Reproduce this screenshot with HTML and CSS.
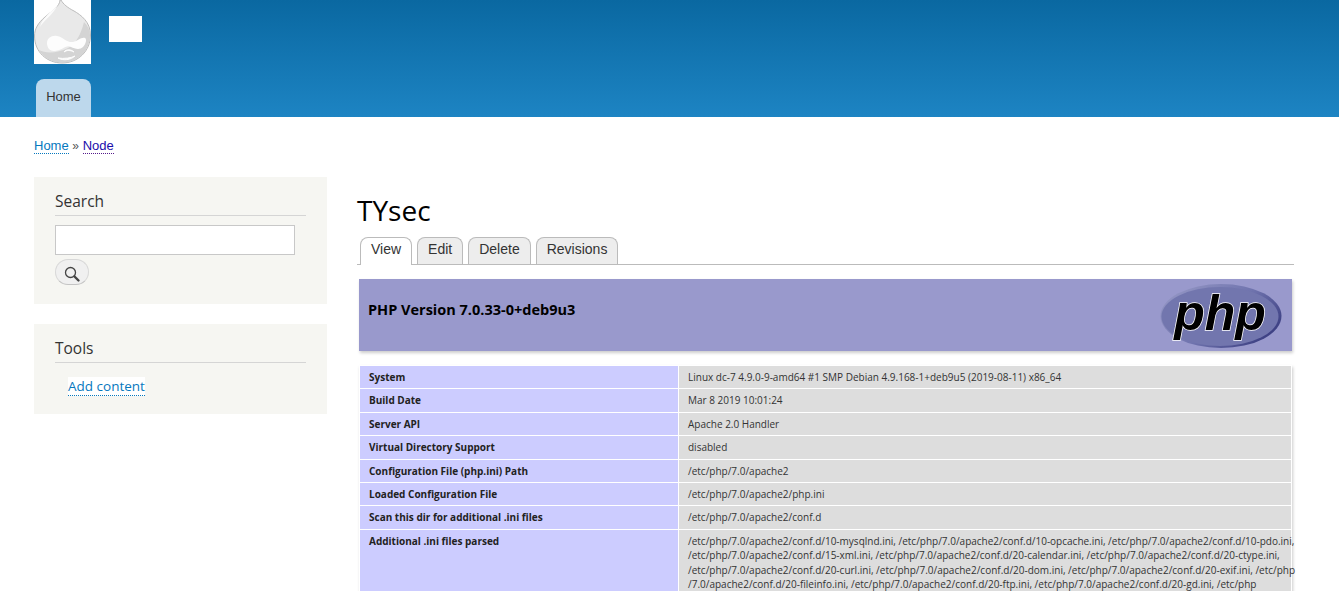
FILE: index.html
```html
<html>
<head>
    <title>TYsec | Drupal</title>
    <link rel="stylesheet" href="styles.css">
</head>
<body>
    <div class="header">
        <div class="branding">
            <a class="logo" href="#">
                <svg width="57" height="64" viewBox="0 0 57 64">
                    <rect width="57" height="64" fill="#fff"/>
                    <path d="M26 0 C26 6 18 11 11 17 C4 23 0.500 29 0.500 36 C0.500 52 13 63 28 63 C44 63 56.500 51 56.500 35 C56.500 22 47 15 40 11 C34 8 29 4 27 0 Z" fill="#e9e9e9" stroke="#bdbdbd"/>
                    <path d="M56 35 C56 51 44 62.500 28 62.500 C18 62.500 10 58 5 50 C12 54 24 53 34 48 C42 44 47 34 50 22 C54 26 56 30 56 35 Z" fill="#d4d4d4"/>
                    <path d="M13 43 C13 38 18 35 23 36 C29 37 33 43 39 42 C44 41 47 37 51 38 C53 39 52 44 49 47 C46 50 41 49 37 47 C32 44 28 51 20 51 C16 51 13 48 13 43 Z" fill="#fdfdfd"/>
                    <path d="M24 58 C29 61 37 60 41 56 C37 58 30 59 24 58 Z M30 52 C32 49 37 49 40 52 C36 50 33 50 30 52 Z" fill="#fdfdfd" stroke="#fdfdfd"/>
                    <path d="M24 5 C16 13 8 18 6 27 C10 20 18 16 24 5 Z" fill="#fbfbfb"/>
                </svg>
            </a>
            <div class="site-name"></div>
        </div>
        <ul class="main-menu">
            <li><a href="#">Home</a></li>
        </ul>
    </div>

    <div class="breadcrumb">
        <a href="#">Home</a> <span class="sep">»</span> <a class="visited" href="#">Node</a>
    </div>

    <div class="layout">
        <div class="sidebar">
            <div class="block block-search">
                <h2>Search</h2>
                <input class="search-input" type="text">
                <button class="search-button">
                    <svg width="18" height="18" viewBox="0 0 18 18">
                        <circle cx="7.500" cy="7.500" r="5" fill="none" stroke="#444" stroke-width="1.300"/>
                        <path d="M11.500 11.500 L15.500 15.500" stroke="#444" stroke-width="2.400" stroke-linecap="round"/>
                    </svg>
                </button>
            </div>
            <div class="block block-tools">
                <h2>Tools</h2>
                <a class="add-content" href="#">Add content</a>
            </div>
        </div>

        <div class="content">
            <h1>TYsec</h1>
            <ul class="tabs">
                <li class="active"><a href="#">View</a></li>
                <li><a href="#">Edit</a></li>
                <li><a href="#">Delete</a></li>
                <li><a href="#">Revisions</a></li>
            </ul>

            <div class="phpinfo">
                <div class="php-head">
                    <h3>PHP Version 7.0.33-0+deb9u3</h3>
                    <svg class="php-logo" width="122" height="66" viewBox="0 0 122 66">
                        <defs>
                            <linearGradient id="rim" x1="0" y1="0" x2="1" y2="0.600">
                                <stop offset="0" stop-color="#9a9cc8"/>
                                <stop offset="0.600" stop-color="#7074ae"/>
                                <stop offset="1" stop-color="#3f4285"/>
                            </linearGradient>
                        </defs>
                        <ellipse cx="61" cy="33" rx="60.500" ry="32" fill="url(#rim)"/>
                        <ellipse cx="60" cy="33.500" rx="58.500" ry="29.500" fill="#7276ae"/>
                        <text class="php-word" x="60" y="47" text-anchor="middle">php</text>
                    </svg>
                </div>
                <table class="info-table">
                    <tr><td class="e">System</td><td class="v">Linux dc-7 4.9.0-9-amd64 #1 SMP Debian 4.9.168-1+deb9u5 (2019-08-11) x86_64</td></tr>
                    <tr><td class="e">Build Date</td><td class="v">Mar 8 2019 10:01:24</td></tr>
                    <tr><td class="e">Server API</td><td class="v">Apache 2.0 Handler</td></tr>
                    <tr><td class="e">Virtual Directory Support</td><td class="v">disabled</td></tr>
                    <tr><td class="e">Configuration File (php.ini) Path</td><td class="v">/etc/php/7.0/apache2</td></tr>
                    <tr><td class="e">Loaded Configuration File</td><td class="v">/etc/php/7.0/apache2/php.ini</td></tr>
                    <tr><td class="e">Scan this dir for additional .ini files</td><td class="v">/etc/php/7.0/apache2/conf.d</td></tr>
                    <tr><td class="e">Additional .ini files parsed</td><td class="v">/etc/php/7.0/apache2/conf.d/10-mysqlnd.ini, /etc/php/7.0/apache2/conf.d/10-opcache.ini, /etc/php/7.0/apache2/conf.d/10-pdo.ini,<br>/etc/php/7.0/apache2/conf.d/15-xml.ini, /etc/php/7.0/apache2/conf.d/20-calendar.ini, /etc/php/7.0/apache2/conf.d/20-ctype.ini,<br>/etc/php/7.0/apache2/conf.d/20-curl.ini, /etc/php/7.0/apache2/conf.d/20-dom.ini, /etc/php/7.0/apache2/conf.d/20-exif.ini, /etc/php<br>/7.0/apache2/conf.d/20-fileinfo.ini, /etc/php/7.0/apache2/conf.d/20-ftp.ini, /etc/php/7.0/apache2/conf.d/20-gd.ini, /etc/php<br>/7.0/apache2/conf.d/20-gettext.ini</td></tr>
                </table>
            </div>
        </div>
    </div>
</body>
</html>
```

FILE: styles.css
```css
body {
    font-family: "Open Sans", sans-serif;
    background-color: #fff;
    margin: 0;
    padding: 0;
    color: #3b3b3b;
    height: 591px;
    overflow: hidden;
}

a {
    text-decoration: none;
}

/* Header */
.header {
    height: 117px;
    padding-left: 34px;
    background: linear-gradient(#0a68a1, #1d84c3);
    box-sizing: border-box;
    display: flex;
    flex-direction: column;
}

.branding {
    display: flex;
    align-items: flex-start;
    height: 79px;
}

.logo {
    display: block;
    height: 64px;
}

.logo svg {
    display: block;
}

.site-name {
    width: 33px;
    height: 26px;
    margin: 16px 0 0 18px;
    background-color: #fff;
}

.main-menu {
    list-style: none;
    margin: 0;
    padding: 0 0 0 2px;
    display: flex;
}

.main-menu a {
    display: block;
    width: 55px;
    height: 38px;
    box-sizing: border-box;
    padding-top: 10px;
    text-align: center;
    font-family: "Liberation Sans", sans-serif;
    font-size: 13px;
    line-height: 15px;
    color: #333;
    background-color: #bdd8ec;
    border-radius: 8px 8px 0 0;
}

/* Breadcrumb */
.breadcrumb {
    padding: 20px 0 0 34px;
    height: 40px;
    box-sizing: border-box;
    font-family: "Liberation Sans", sans-serif;
    font-size: 13px;
    line-height: 17px;
}

.breadcrumb a {
    color: #0678be;
    border-bottom: 1px dotted #0678be;
}

.breadcrumb a.visited {
    color: #1a0dab;
    border-bottom-color: #551a8b;
}

.breadcrumb .sep {
    color: #555;
    font-size: 12px;
}

/* Columns */
.layout {
    display: flex;
    padding: 20px 45px 0 34px;
}

.sidebar {
    width: 293px;
    flex-shrink: 0;
}

.block {
    background-color: #f6f6f2;
    padding: 14px 21px 0;
    box-sizing: border-box;
}

.block-search {
    height: 127px;
    margin-bottom: 20px;
}

.block-tools {
    height: 90px;
}

.block h2 {
    margin: 0 0 9px;
    padding-bottom: 3px;
    font-size: 15.500px;
    line-height: 21px;
    font-weight: 400;
    color: #333;
    border-bottom: 1px solid #d5d5d5;
}

.search-input {
    display: block;
    width: 240px;
    height: 30px;
    box-sizing: border-box;
    border: 1px solid #c8c8c8;
    background-color: #fff;
    padding: 0;
    margin: 0 0 4px;
}

.search-button {
    display: block;
    width: 34px;
    height: 26px;
    padding: 0;
    border: 1px solid #d8d8d8;
    border-bottom-color: #c4c4c4;
    border-radius: 13px;
    background-color: #f0f0f0;
}

.search-button svg {
    display: block;
    margin: 3px 0 0 7px;
}

.add-content {
    display: inline-block;
    margin: 5px 0 0 13px;
    font-size: 13.500px;
    line-height: 18px;
    color: #0678be;
    background-color: #fff;
    border-bottom: 1px dotted #0678be;
}

/* Main column */
.content {
    flex: 1;
    margin-left: 30px;
}

h1 {
    margin: 14px 0 0;
    font-size: 28px;
    line-height: 39px;
    font-weight: 400;
    color: #000;
}

.tabs {
    list-style: none;
    margin: 7px 0 0;
    padding: 0 0 0 3px;
    height: 28px;
    box-sizing: border-box;
    border-bottom: 1px solid #bbb;
    display: flex;
    gap: 5px;
}

.tabs a {
    display: block;
    height: 27px;
    box-sizing: border-box;
    padding: 3px 10px 0;
    font-family: "Liberation Sans", sans-serif;
    font-size: 14px;
    line-height: 17px;
    color: #333;
    background-color: #ededed;
    border: 1px solid #bbb;
    border-bottom: none;
    border-radius: 8px 8px 0 0;
}

.tabs .active a {
    height: 28px;
    background-color: #fff;
}

.phpinfo {
    margin: 14px 2px 0;
    font-family: "Open Sans", sans-serif;
}

.php-head {
    display: flex;
    justify-content: space-between;
    height: 72px;
    box-sizing: border-box;
    padding: 4px 10px 0 9px;
    background-color: #9999cc;
    box-shadow: 1px 2px 3px #ccc;
}

.php-head h3 {
    margin: 17px 0 0;
    font-size: 14.500px;
    line-height: 20px;
    font-weight: 700;
    color: #000;
}

.php-word {
    font-family: "Liberation Sans", sans-serif;
    font-size: 50px;
    font-weight: 700;
    font-style: italic;
    fill: #000;
    stroke: #fff;
    stroke-width: 1.500px;
    paint-order: stroke;
}

.info-table {
    width: 100%;
    margin-top: 14px;
    border-collapse: collapse;
    table-layout: fixed;
    font-size: 10px;
    line-height: 14.400px;
    box-shadow: 1px 2px 3px #ccc;
}

.info-table td {
    padding: 4px 9px;
    border: 1px solid #fff;
    vertical-align: top;
    white-space: nowrap;
}

.info-table .e {
    width: 300px;
    background-color: #ccccff;
    font-weight: 700;
    color: #222;
}

.info-table .v {
    background-color: #dddddd;
    color: #333;
}
```
